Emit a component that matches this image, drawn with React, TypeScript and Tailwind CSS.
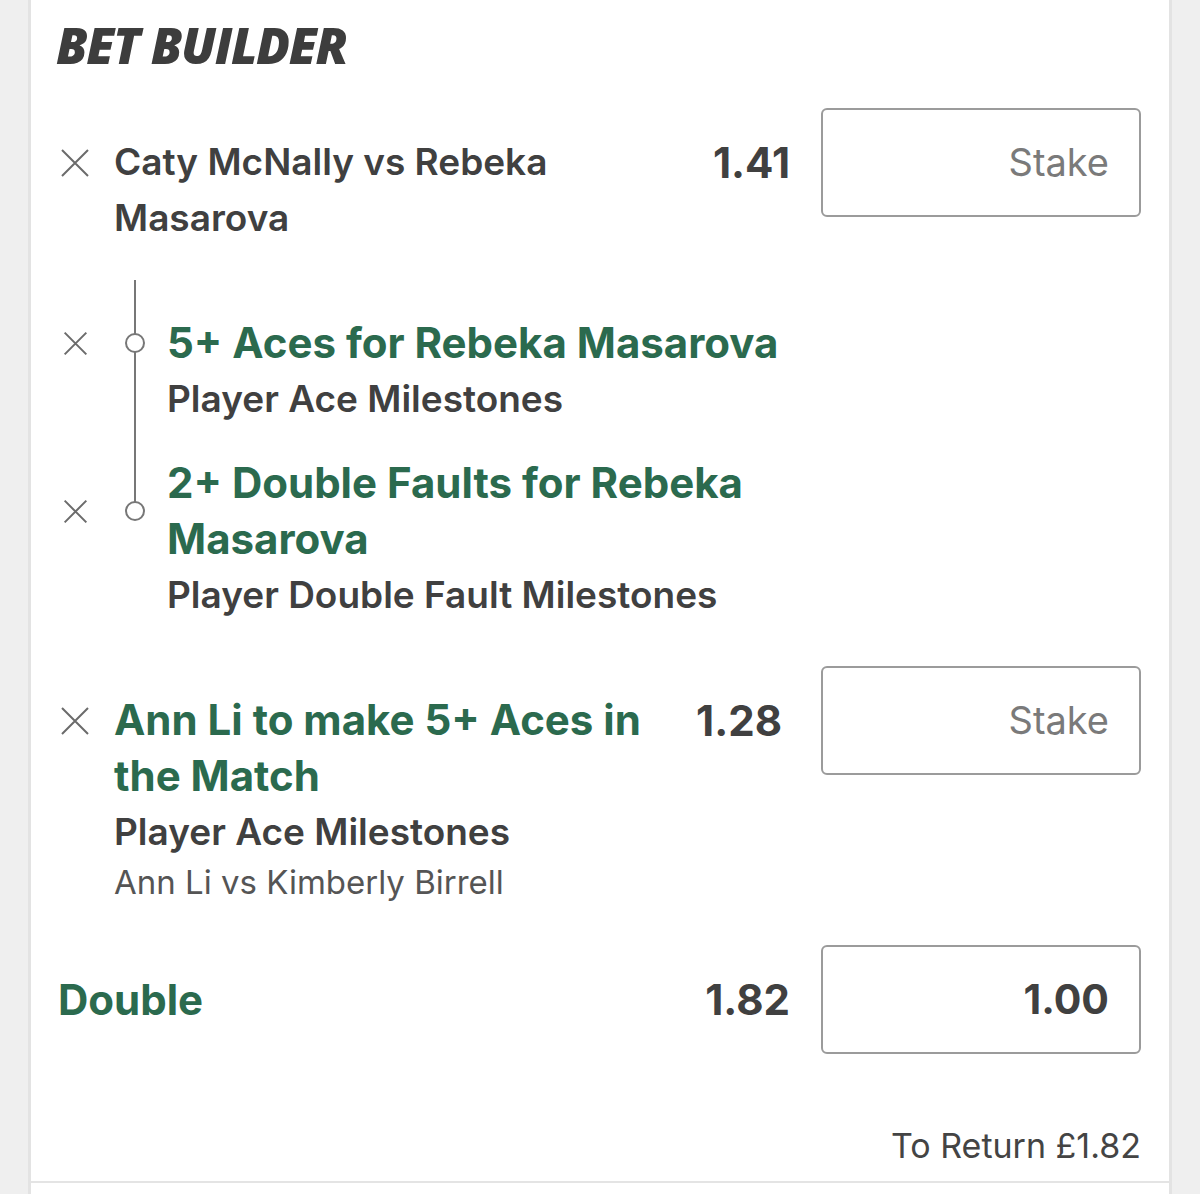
import React from "react";

const font = { fontFamily: "Inter, 'Noto Sans', sans-serif" };

function Cross({ size = 30 }: { size?: number }) {
  return (
    <svg width={size} height={size} viewBox="0 0 30 30" fill="none">
      <path d="M2 2 L28 28 M28 2 L2 28" stroke="#6b6b6b" strokeWidth={2 * (30 / size)} />
    </svg>
  );
}

function StakeBox({ value }: { value?: string }) {
  return (
    <div className="ml-[31px] flex h-[109px] w-[320px] shrink-0 items-center justify-end rounded-[6px] border-2 border-[#9b9b9b] pr-[30px]">
      {value ? (
        <span className="text-[41px] font-bold text-[#404040]">{value}</span>
      ) : (
        <span className="text-[38px] font-normal text-[#7a7a7a]">Stake</span>
      )}
    </div>
  );
}

function Odds({ value, className = "" }: { value: string; className?: string }) {
  return (
    <div className={`w-[100px] shrink-0 text-right text-[42px] font-bold leading-[56px] text-[#404040] ${className}`}>
      {value}
    </div>
  );
}

function Leg({ title, market, className = "" }: { title: string; market: string; className?: string }) {
  return (
    <div className={className}>
      <div className="flex items-center">
        <div className="flex w-[34px] justify-center">
          <Cross size={25} />
        </div>
        <div className="w-[75px] pl-[33px]">
          <div className="relative z-10 h-[20px] w-[20px] rounded-full border-2 border-[#777] bg-white" />
        </div>
        <div className="flex-1 text-[42px] font-bold leading-[56px] text-[#2b6a4e]">{title}</div>
      </div>
      <div className="pl-[109px] text-[37px] font-semibold leading-[56px] text-[#404040]">{market}</div>
    </div>
  );
}

export default function App() {
  return (
    <div className="min-h-screen bg-[#efefef]" style={font}>
      <div className="mx-[28px] border-x-[3px] border-[#e3e3e3] bg-white">
        <div className="border-b-2 border-[#e4e4e4] pl-[27px] pr-[28px] pt-[17px] pb-[13px]">
          <h2
            className="-ml-[2px] text-[50px] font-extrabold italic uppercase leading-[56px] tracking-[-1.4px] text-[#3d3d3d]"
            style={{ fontFamily: "'Open Sans', 'Liberation Sans', sans-serif" }}
          >
            Bet Builder
          </h2>

          {/* match bet */}
          <div className="mt-[35px] flex items-start">
            <div className="w-[56px] shrink-0 pl-[2px] pt-[40px]">
              <Cross />
            </div>
            <div className="flex-1 pt-[26px] text-[37px] font-semibold leading-[56px] text-[#404040]">
              Caty McNally vs Rebeka Masarova
            </div>
            <div className="flex h-[109px] items-center">
              <Odds value="1.41" />
            </div>
            <StakeBox />
          </div>

          {/* bet builder legs */}
          <div className="relative mt-[34px] pr-[300px] pt-[35px]">
            <div className="absolute left-[76px] top-0 h-[231px] w-[2px] bg-[#777]" />
            <Leg title="5+ Aces for Rebeka Masarova" market="Player Ace Milestones" />
            <Leg className="mt-[28px]" title="2+ Double Faults for Rebeka Masarova" market="Player Double Fault Milestones" />
          </div>

          {/* single */}
          <div className="mt-[43px] flex items-start">
            <div className="w-[56px] shrink-0 pl-[2px] pt-[40px]">
              <Cross />
            </div>
            <div className="flex-1 pt-[26px]">
              <div className="text-[42px] font-bold leading-[56px] text-[#2b6a4e]">Ann Li to make 5+ Aces in the Match</div>
              <div className="text-[37px] font-semibold leading-[56px] text-[#404040]">Player Ace Milestones</div>
              <div className="text-[33px] font-normal leading-[44px] text-[#555]">Ann Li vs Kimberly Birrell</div>
            </div>
            <div className="flex h-[109px] items-center">
              <Odds value="1.28" className="pr-[8px]" />
            </div>
            <StakeBox />
          </div>

          {/* double */}
          <div className="mt-[41px] flex items-center">
            <div className="flex-1 text-[42px] font-bold leading-[56px] text-[#2b6a4e]">Double</div>
            <Odds value="1.82" />
            <StakeBox value="1.00" />
          </div>

          <div className="mt-[70px] text-right text-[34px] leading-[44px] text-[#444]">To Return £1.82</div>
        </div>
        <div className="h-[40px]" />
      </div>
    </div>
  );
}
